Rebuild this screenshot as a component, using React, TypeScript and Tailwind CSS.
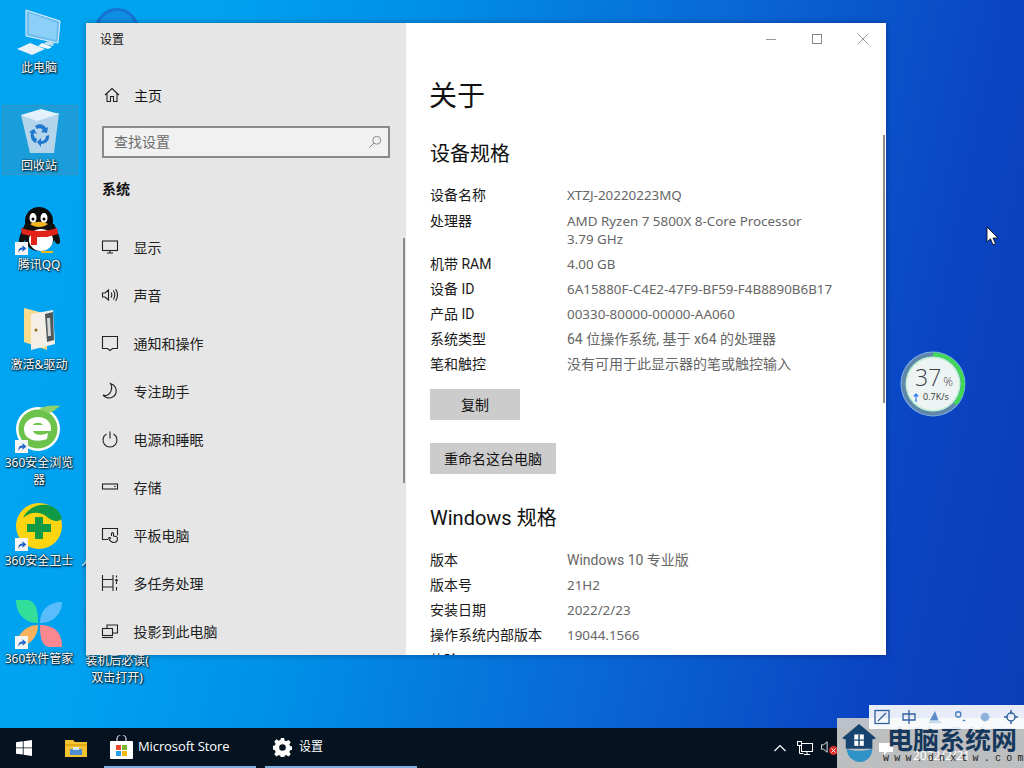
import React from "react";

const cjk = "font-['Noto_Sans','Noto_Sans_CJK_SC',sans-serif]";
const ui = "font-['Roboto','Noto_Sans_CJK_SC',sans-serif]";

function Shortcut() {
  return (
    <svg viewBox="0 0 12 12" className="absolute left-0 top-[36px] w-[13px] h-[13px]">
      <rect width="12" height="12" fill="#f4f4f4" />
      <path d="M3 10 C3 6 5 5 7 5 L7 3 L10.500 6 L7 9 L7 7 C5.500 7 4 8 3 10Z" fill="#1e63c8" />
    </svg>
  );
}

function DesktopIcon({ x, y, w = 76, label, children }: { x: number; y: number; w?: number; label: React.ReactNode; children?: React.ReactNode }) {
  return (
    <div className="absolute flex flex-col items-center" style={{ left: x, top: y, width: w }}>
      <div className="relative w-[48px] h-[48px]">{children}</div>
      <div className="text-white text-[12px] leading-[17px] text-center [text-shadow:1px_1px_2px_#000,0_0_2px_#000] mt-[2px]">{label}</div>
    </div>
  );
}

const navIcon = "w-[18px] h-[18px] shrink-0 fill-none stroke-[#222] stroke-[1.1]";

const navItems: [string, React.ReactNode][] = [
  ["显示", <svg viewBox="0 0 18 18" className={navIcon}><rect x="1.500" y="3" width="15" height="9.500" /><path d="M9 12.500V15M6 15h6" /></svg>],
  ["声音", <svg viewBox="0 0 18 18" className={navIcon}><path d="M1.500 7v4h2.500l3.500 3V4L4 7ZM10 6.500c1 1.500 1 3.500 0 5M12.300 4.500c1.800 2.700 1.800 6.300 0 9M14.600 3c2.400 3.700 2.400 8.300 0 12" /></svg>],
  ["通知和操作", <svg viewBox="0 0 18 18" className={navIcon}><path d="M1.500 2.500h15v12h-5L9 16.500 6.500 14.500h-5Z" /></svg>],
  ["专注助手", <svg viewBox="0 0 18 18" className={navIcon}><path d="M9.500 1.500C14 3 16 7 15 11c-1 4-6 6-9.500 4.500C4 15 2.500 13.500 2 13c3 1 6 0 7.500-3C11 7 11 4 9.500 1.500Z" /></svg>],
  ["电源和睡眠", <svg viewBox="0 0 18 18" className={navIcon}><path d="M5.500 4a7 7 0 1 0 7 0M9 1.500v7" /></svg>],
  ["存储", <svg viewBox="0 0 18 18" className={navIcon}><rect x="1.500" y="6" width="15" height="5" /><path d="M13 8.500h1.500" /></svg>],
  ["平板电脑", <svg viewBox="0 0 18 18" className={navIcon}><path d="M7 13.500H1.500v-11h15v7M10.500 10V7.500a1 1 0 0 1 2 0V10l2.500.5c1 .3 1.500 1 1.500 2 0 2.500-1.500 4-4 4-2 0-3-1-4.500-3.500l-.5-1c.5-.7 1.500-.5 2.500.5" /></svg>],
  ["多任务处理", <svg viewBox="0 0 18 18" className={navIcon}><path d="M1.500 1v16M12 1v16M1.500 5.500H12M1.500 13H12M15.500 1.500v2M15.500 8v2M15.500 13v3.500" /><circle cx="15.500" cy="6.300" r=".8" fill="#222" /></svg>],
  ["投影到此电脑", <svg viewBox="0 0 18 18" className={navIcon}><path d="M6 6V3h10.500v8H12" /><rect x="1.500" y="6.500" width="10" height="7" /><path d="M1 15.500h11" /></svg>],
];

const latin = "font-['Noto_Sans',sans-serif] text-[13.4px]";

const specRows: [string, React.ReactNode][] = [
  ["设备名称", <span className={latin}>XTZJ-20220223MQ</span>],
  ["处理器", <span className={latin}>AMD Ryzen 7 5800X 8-Core Processor<br />3.79 GHz</span>],
  ["机带 RAM", <span className={latin}>4.00 GB</span>],
  ["设备 ID", <span className={latin}>6A15880F-C4E2-47F9-BF59-F4B8890B6B17</span>],
  ["产品 ID", <span className={latin}>00330-80000-00000-AA060</span>],
  ["系统类型", "64 位操作系统, 基于 x64 的处理器"],
  ["笔和触控", "没有可用于此显示器的笔或触控输入"],
];

const winRows: [string, React.ReactNode][] = [
  ["版本", "Windows 10 专业版"],
  ["版本号", <span className={latin}>21H2</span>],
  ["安装日期", <span className={latin}>2022/2/23</span>],
  ["操作系统内部版本", <span className={latin}>19044.1566</span>],
  ["体验", ""],
];

function Row({ k, v, className = "mb-[7px]" }: { k: string; v: React.ReactNode; className?: string }) {
  return (
    <div className={`flex text-[14px] leading-[18px] ${ui} ${className}`}>
      <div className="w-[137px] shrink-0 text-[#1a1a1a]">{k}</div>
      <div className="text-[#666666]">{v}</div>
    </div>
  );
}

function SettingsWindow() {
  return (
    <div className="absolute left-[86px] top-[23px] w-[800px] h-[632px] flex overflow-hidden shadow-[0_0_6px_rgba(0,0,0,0.35)] bg-white">
      <aside className="relative w-[320px] h-full bg-[#e6e6e6] shrink-0 flex flex-col">
        <div className="h-[34px] pl-[14px] flex items-center text-[12px] text-[#111]">设置</div>
        <div className="h-[48px] mt-[15px] pl-[18px] flex items-center gap-[14px] text-[14px] text-[#111]">
          <svg viewBox="0 0 16 16" className="w-[16px] h-[16px] fill-none stroke-[#222] stroke-[1.1]">
            <path d="M1 8 8 1.500 15 8M3 6.500V14.500h3.500V9.500h3V14.500H13V6.500" />
          </svg>
          主页
        </div>
        <div className="mx-[16px] mt-[7px] h-[32px] border-2 border-[#8a8a8a] bg-[#f1f1f1] flex items-center justify-between pl-[10px] pr-[6px] text-[14px] leading-[18px] text-[#6c6c6c]">
          <span className="-mt-[1px]">查找设置</span>
          <svg viewBox="0 0 16 16" className="w-[14px] h-[14px] fill-none stroke-[#888] stroke-[1.1]">
            <circle cx="10" cy="6" r="4.500" /><path d="M6.800 9.200 1.500 14.500" />
          </svg>
        </div>
        <div className="pl-[16px] mt-[22px] text-[14px] font-bold text-[#111] leading-[18px]">系统</div>
        <nav className="mt-[25px] flex flex-col">
          {navItems.map(([label, icon]) => (
            <div key={label} className="h-[48px] pl-[15px] flex items-center gap-[15px] text-[14px] text-[#222] shrink-0">
              {icon}
              <span className="-ml-[0.5px]">{label}</span>
            </div>
          ))}
        </nav>
        <div className="absolute right-[1px] top-[215px] w-[2px] h-[245px] bg-[#8b8b8b]" />
      </aside>
      <main className="relative flex-1 overflow-hidden pl-[24px]">
        <div className="absolute top-0 right-0 flex h-[32px] items-center">
          <div className="w-[46px] flex justify-center">
            <svg viewBox="0 0 12 12" className="w-[12px] h-[12px] stroke-[#999] fill-none"><path d="M1 6.500h10" /></svg>
          </div>
          <div className="w-[46px] flex justify-center">
            <svg viewBox="0 0 12 12" className="w-[12px] h-[12px] stroke-[#888] fill-none"><rect x="1.500" y="1.500" width="9" height="9" /></svg>
          </div>
          <div className="w-[46px] flex justify-center">
            <svg viewBox="0 0 12 12" className="w-[12px] h-[12px] stroke-[#999] fill-none"><path d="M.5.500l11 11M11.500.500l-11 11" /></svg>
          </div>
        </div>
        <h1 className="pt-[50px] -ml-[1px] text-[28px] leading-[44px] text-[#111]">关于</h1>
        <h2 className={`mt-[22px] text-[20px] leading-[30px] text-[#111] ${ui}`}>设备规格</h2>
        <div className="mt-[17px]">
          {specRows.map(([k, v], i) => <Row key={k} k={k} v={v} className={i === 0 ? "mb-[8px]" : "mb-[7px]"} />)}
        </div>
        <div className="mt-[16px] w-[90px] h-[31px] bg-[#cccccc] flex items-center justify-center text-[14px] text-[#111]">复制</div>
        <div className="mt-[23px] w-[126px] h-[31px] bg-[#cccccc] flex items-center justify-center text-[14px] text-[#111]">重命名这台电脑</div>
        <h2 className={`mt-[29px] text-[20px] leading-[30px] text-[#111] ${ui}`}>Windows 规格</h2>
        <div className="mt-[18px]">
          {winRows.map(([k, v]) => <Row key={k} k={k} v={v} />)}
        </div>
        <div className="absolute right-[1px] top-[112px] w-[2px] h-[268px] bg-[#8b8b8b]" />
      </main>
    </div>
  );
}

function Gauge() {
  return (
    <div className="absolute left-[900px] top-[351px] w-[66px] h-[66px]">
      <svg viewBox="0 0 66 66" className="absolute inset-0 w-full h-full">
        <circle cx="33" cy="33" r="32.500" fill="#7fb0ee" />
        <circle cx="33" cy="33" r="29.500" fill="none" stroke="#5f87a8" strokeWidth="4" />
        <path d="M33 3.500A29.500 29.500 0 0 1 55 53" fill="none" stroke="#3fd957" strokeWidth="4" />
        <circle cx="33" cy="33" r="27.500" fill="#bff0cf" />
        <circle cx="33" cy="33" r="26" fill="#eef4f4" />
      </svg>
      <div className="absolute left-[15px] top-[11px] flex items-baseline text-[#3a4048] font-['Open_Sans',sans-serif]">
        <span className="text-[23px] leading-[30px] font-light">37</span>
        <span className="text-[12px] ml-[2px] font-light">%</span>
      </div>
      <div className="absolute left-[13px] top-[40px] flex items-center gap-[4px] text-[9px] leading-[12px] text-[#333] font-['Open_Sans',sans-serif]">
        <svg viewBox="0 0 6 9" className="w-[6px] h-[9px] fill-none stroke-[#3b82f6] stroke-[1.3]"><path d="M3 9V1M.8 3.500 3 1l2.200 2.500" /></svg>
        0.7K/s
      </div>
    </div>
  );
}

function Watermark() {
  return (
    <>
      <div className="absolute left-[837px] top-[718px] w-[187px] h-[50px] bg-[#c6c7c8]/95">
        <svg viewBox="0 0 40 44" className="absolute left-[4px] top-[4px] w-[38px] h-[42px]">
          <path d="M1 17 19 2l18 15-3 1H4Z" fill="#16436f" />
          <rect x="5" y="16" width="28" height="12" fill="#16436f" />
          <rect x="14" y="13" width="10" height="12" fill="#fff" />
          <path d="M19 13v12M14 19h10" stroke="#16436f" strokeWidth="1.500" />
          <path d="M6 28c8 3 18 3 27 0 0 8-6 14-13 14S6 36 6 28Z" fill="#2f93c8" />
        </svg>
        <svg viewBox="0 0 16 16" className="absolute left-[41px] top-[23px] w-[16px] h-[16px] fill-white"><path d="M1 2h14v9H9l-3 3v-3H1Z" /></svg>
        <span className="absolute left-[76px] top-[30px] text-[12px] leading-[16px] text-white whitespace-nowrap">2022/2/21</span>
        <div className="absolute left-[50px] top-[4px] text-[26px] leading-[32px] font-bold text-[#16385c] whitespace-nowrap font-['Noto_Sans_CJK_SC',serif]">电脑系统网</div>
        <div className="absolute left-[46px] top-[35px] text-[10px] leading-[12px] text-[#222] tracking-[5.200px] whitespace-nowrap font-['Liberation_Mono',monospace]">www.dnxtw.com</div>
      </div>
      <div className="absolute left-[869px] top-[705px] w-[155px] h-[24px] bg-white/90 flex items-center justify-between px-[5px]">
        <svg viewBox="0 0 16 16" className="w-[16px] h-[16px] fill-none stroke-[#2f5f9e] stroke-[1.300]"><rect x="1" y="1.500" width="14" height="13" /><path d="M4 12 12 4" /></svg>
        <svg viewBox="0 0 16 16" className="w-[16px] h-[16px] fill-none stroke-[#2f5f9e] stroke-[1.300]"><path d="M2 5h12v6H2ZM8 1v14" /></svg>
        <svg viewBox="0 0 16 16" className="w-[14px] h-[14px] fill-[#5b8ec9]"><path d="M8 1 12 12H2Z" /><path d="M1 13h14v2H1Z" fill="#bcd3ea" /></svg>
        <svg viewBox="0 0 16 16" className="w-[14px] h-[14px] fill-none stroke-[#4a7fc0] stroke-[1.500]"><circle cx="6" cy="5" r="3" /><path d="M11 12h3" /></svg>
        <svg viewBox="0 0 16 16" className="w-[14px] h-[14px] fill-[#8fb2dc]"><circle cx="8" cy="8" r="5" /></svg>
        <svg viewBox="0 0 16 16" className="w-[16px] h-[16px] fill-none stroke-[#2f5f9e] stroke-[1.500]"><circle cx="8" cy="8" r="4" /><path d="M8 1v3M8 12v3M1 8h3M12 8h3" /></svg>
      </div>
    </>
  );
}

function Taskbar() {
  return (
    <footer className="h-[40px] bg-[#04131f] relative flex items-center shrink-0 text-white">
      <div className="w-[48px] flex justify-center">
        <svg viewBox="0 0 16 16" className="w-[16px] h-[16px] fill-white">
          <path d="M0 2.300 6.800 1.300V7.500H0ZM7.600 1.200 16 0V7.500H7.600ZM0 8.300H6.800V14.600L0 13.700ZM7.600 8.300H16V16L7.600 14.800Z" />
        </svg>
      </div>
      <div className="w-[56px] flex justify-center">
        <svg viewBox="0 0 22 18" className="w-[22px] h-[18px]">
          <path d="M0 1h8l2 2h12v15H0Z" fill="#f4c430" />
          <path d="M0 5h22v2H0Z" fill="#e0a818" />
          <rect x="5" y="10" width="12" height="6" fill="#4c8fd6" />
          <rect x="8" y="8" width="6" height="3" fill="#d9e8f5" />
        </svg>
      </div>
      <div className="w-[152px] h-full flex items-center pl-[6px] gap-[5px] border-b-2 border-[#7fb2de]">
        <svg viewBox="0 0 23 24" className="w-[23px] h-[24px] shrink-0">
          <path d="M7 6V4a4.500 4.500 0 0 1 9 0v2" fill="none" stroke="#fff" strokeWidth="1" />
          <rect x="0" y="6" width="23" height="18" rx="1" fill="#fff" />
          <rect x="6" y="10" width="5" height="5" fill="#e8492f" />
          <rect x="12" y="10" width="5" height="5" fill="#7db52e" />
          <rect x="6" y="16" width="5" height="5" fill="#2a9fe8" />
          <rect x="12" y="16" width="5" height="5" fill="#f6b90f" />
        </svg>
        <span className="text-[13px] font-['Open_Sans',sans-serif] tracking-[-0.1px]">Microsoft Store</span>
      </div>
      <div className="w-[152px] h-full ml-[9px] flex items-center pl-[8px] gap-[7px] border-b-2 border-[#7fb2de]">
        <svg viewBox="0 0 20 20" className="w-[19px] h-[19px] fill-white shrink-0">
          <path fillRule="evenodd" d="M8.300 0h3.400l.5 2.700 1.800.8 2.300-1.500 2.400 2.400-1.500 2.300.8 1.800 2.700.5v3.400l-2.700.5-.8 1.800 1.500 2.300-2.400 2.400-2.300-1.500-1.800.8-.5 2.700H8.300l-.5-2.700-1.800-.8-2.300 1.500-2.400-2.400 1.500-2.300-.8-1.800L-.7 11.700V8.300l2.700-.5.800-1.800L1.300 3.700l2.400-2.400L6 2.800l1.800-.8ZM10 6.500a3.500 3.500 0 1 0 0 7 3.500 3.500 0 0 0 0-7Z" />
        </svg>
        <span className="text-[12px]">设置</span>
      </div>
      <div className="absolute left-[774px] top-0 h-full flex items-center">
        <svg viewBox="0 0 12 8" className="w-[12px] h-[8px] fill-none stroke-white stroke-[1.200]"><path d="M.5 7 6 1.500 11.500 7" /></svg>
        <svg viewBox="0 0 16 14" className="w-[16px] h-[14px] ml-[11px] fill-none stroke-white"><rect x="4.500" y="2.500" width="11" height="8" /><rect x=".5" y=".5" width="4" height="4" fill="#04131f" /><path d="M2.500 5v7.500h4M10 10.500v3M7 13.500h6" /></svg>
        <div className="relative ml-[8px] w-[16px] h-[16px]">
          <svg viewBox="0 0 16 16" className="w-[14px] h-[14px] fill-none stroke-white"><path d="M.5 5.500v5h2.500l4 3.500V2L3 5.500Z" /></svg>
          <svg viewBox="0 0 9 9" className="absolute -right-[1px] bottom-[1px] w-[9px] h-[9px]">
            <circle cx="4.500" cy="4.500" r="4.500" fill="#d9302c" />
            <path d="M2.500 2.500l4 4M6.500 2.500l-4 4" stroke="#fff" strokeWidth="1" />
          </svg>
        </div>
      </div>
    </footer>
  );
}

export default function App() {
  return (
    <div className={`w-[1024px] h-[768px] overflow-hidden flex flex-col ${cjk}`}>
      <div className="relative flex-1 bg-[linear-gradient(102deg,#00a6f2_0%,#00a2f0_18%,#0090e8_36%,#0a62d4_66%,#0a44c2_86%,#0c3db8_100%)]">
        <div className="absolute left-[2px] top-[105px] w-[76px] h-[70px] bg-[#808080]/20 border border-[#808080]/30" />

        <DesktopIcon x={1} y={9} label="此电脑">
          <svg viewBox="0 0 48 48" className="w-full h-full">
            <path d="M11 1 45 12 43 34 11 27Z" fill="#6fbdf0" stroke="#e4f3fc" strokeWidth="1" />
            <path d="M14 4 42 14 41 31 14 25Z" fill="#8ad0f7" />
            <path d="M33 32l6 2-1 3-10-2Z" fill="#c4dbe9" />
            <path d="M2 40 15 34 30 40 17 46Z" fill="#e8f1f7" />
            <path d="M27 34l10 4-4 2-10-3Z" fill="#f5f8fb" />
          </svg>
        </DesktopIcon>
        <DesktopIcon x={1} y={107} label="回收站">
          <svg viewBox="0 0 48 48" className="w-full h-full">
            <path d="M6 8 44 6 39 46 15 46Z" fill="#b3d4ea" />
            <path d="M6 8 26 2 44 7 22 14Z" fill="#e2f1fa" />
            <path d="M20 19c4-3 9-2 11 2l2-1-1 6-6-1 2-2c-2-2-4-2-6-1Zm14 9c1 5-3 9-8 9l0 3-4-5 4-4 0 3c3 0 5-2 5-5Zm-13 8c-4-1-6-6-5-10l-2-1 5-3 3 5-3-1c-1 3 1 5 3 6Z" fill="#1f78cf" />
          </svg>
        </DesktopIcon>
        <DesktopIcon x={1} y={206} label="腾讯QQ">
          <svg viewBox="0 0 48 48" className="w-full h-full">
            <ellipse cx="24" cy="15" rx="14" ry="14" fill="#0a0a0a" />
            <path d="M10 18C4 30 2 38 6 38c2 0 3-2 4-4 2 8 8 11 14 11s13-3 15-11c1 2 2 4 4 4 4 0 2-8-4-20Z" fill="#111" />
            <ellipse cx="26" cy="34" rx="12" ry="11" fill="#fff" />
            <ellipse cx="18" cy="12" rx="3.500" ry="5" fill="#fff" />
            <ellipse cx="29" cy="12" rx="3.500" ry="5" fill="#fff" />
            <circle cx="18" cy="13" r="1.500" fill="#000" />
            <circle cx="29" cy="13" r="1.500" fill="#000" />
            <path d="M15 18c5-3 13-3 18 0-5 4-13 4-18 0Z" fill="#f4b81e" />
            <path d="M6 22c10 4 26 4 36 0l1 6-11 3H22v8h-6v-9L7 28Z" fill="#e2231a" />
            <path d="M26 45h12v2H26Z" fill="#f4b81e" />
          </svg>
          <Shortcut />
        </DesktopIcon>
        <DesktopIcon x={1} y={306} label={<span className="whitespace-nowrap">激活&amp;驱动</span>}>
          <svg viewBox="0 0 48 48" className="w-full h-full">
            <path d="M9 2 32 8v36L9 36Z" fill="#f7dc8e" />
            <path d="M16 8 38 4 40 38 16 44Z" fill="#f3efe6" />
            <path d="M30 8 38 6 39 34 32 36Z" fill="#4f5a5f" />
            <path d="M32 12 35 12 36 30 33 30Z" fill="#d6d6d6" />
            <circle cx="21" cy="24" r="1.500" fill="#8a6a1c" />
          </svg>
        </DesktopIcon>
        <DesktopIcon x={1} y={404} label={<>360安全浏览<br />器</>}>
          <svg viewBox="0 0 48 48" className="w-full h-full">
            <circle cx="23" cy="25" r="22" fill="#fff" />
            <circle cx="23" cy="25" r="19.500" fill="#6cc24a" />
            <path d="M9 25c0-7 6-12 14-12s14 5 13 14H18c1 4 8 5 15 2l-1 6c-11 4-23 1-23-10Zm9-4h10c-2-3-8-3-10 0Z" fill="#fff" />
            <path d="M24 5c7-4 15-4 22-3-5 2-7 6-12 7Z" fill="#8fd16a" />
          </svg>
          <Shortcut />
        </DesktopIcon>
        <DesktopIcon x={1} y={502} label="360安全卫士">
          <svg viewBox="0 0 48 48" className="w-full h-full">
            <circle cx="24" cy="24" r="23" fill="#ffd511" />
            <path d="M8 16C14 1 40-4 47 16c-4 6-12 2-16-2-8-5-16-4-23 2Z" fill="#119a46" />
            <path d="M20 15h8v7h8v8h-8v7h-8v-7h-8v-8h8Z" fill="#119a46" />
          </svg>
          <Shortcut />
        </DesktopIcon>
        <DesktopIcon x={1} y={600} label="360软件管家">
          <svg viewBox="0 0 48 48" className="w-full h-full">
            <path d="M1 0h12c9 2 10 12 10 23C12 23 1 16 1 0Z" fill="#33de9a" />
            <path d="M47 2C47 14 38 23 25 23c0-13 9-21 22-21Z" fill="#59bdfb" />
            <path d="M1 47C1 36 10 25 23 25c0 12-9 22-22 22Z" fill="#fbb25e" />
            <path d="M25 25c13 0 22 6 22 22H35c-9 0-10-12-10-22Z" fill="#fb8791" />
          </svg>
          <Shortcut />
        </DesktopIcon>
        <DesktopIcon x={79} y={602} label={<>装机后必读(<br />双击打开)</>} />
        <div className="absolute left-[81px] top-[553px] w-[5px] overflow-hidden text-white text-[12px] leading-[17px] [text-shadow:1px_1px_2px_#000]">人</div>
        <div className="absolute left-[95px] top-[8px] w-[44px] h-[44px] rounded-full border-[3px] border-[#1673cf] bg-[#0e8fe4]" />

        <SettingsWindow />
        <Gauge />
        <svg viewBox="0 0 14 20" className="absolute left-[986px] top-[226px] w-[14px] h-[20px]">
          <path d="M1 1v15l3.500-3.200 2.500 6 2.500-1-2.500-5.800h5Z" fill="#fff" stroke="#000" strokeWidth=".8" />
        </svg>
      </div>
      <Taskbar />
      <Watermark />
    </div>
  );
}
